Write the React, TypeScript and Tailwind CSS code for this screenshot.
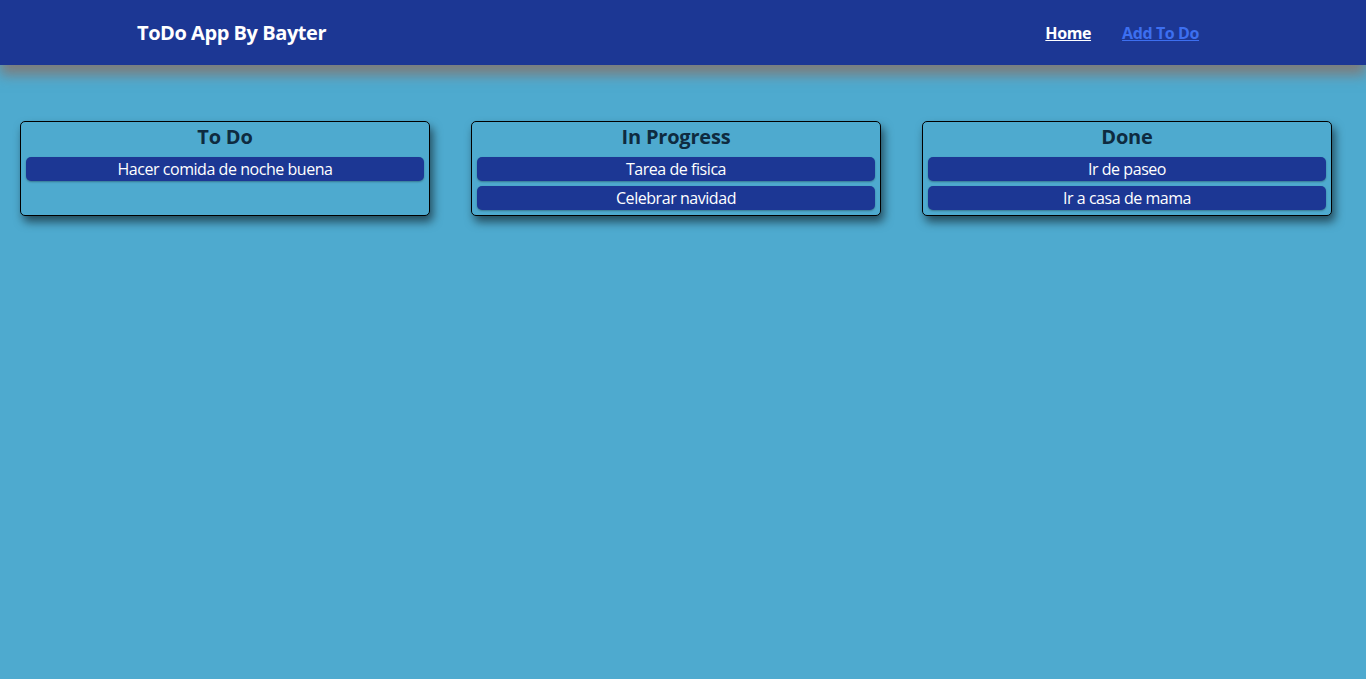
import React from 'react';

interface Column {
  title: string;
  items: string[];
}

const columns: Column[] = [
  { title: 'To Do', items: ['Hacer comida de noche buena'] },
  { title: 'In Progress', items: ['Tarea de fisica', 'Celebrar navidad'] },
  { title: 'Done', items: ['Ir de paseo', 'Ir a casa de mama'] },
];

const Board: React.FC<{ column: Column }> = ({ column }) => (
  <div className="w-[410px] border border-black rounded-[5px] bg-[#4eaacf] px-[5px] pb-[5px] shadow-[3px_6px_10px_rgba(0,0,0,0.55)]">
    <h2 className="text-center text-[20px] font-bold leading-[30px] tracking-[-0.2px] text-[#0e2b40] mb-[5px]">{column.title}</h2>
    <div className="flex flex-col gap-[5px]">
      {column.items.map((item) => (
        <div
          key={item}
          className="h-[24px] rounded-[5px] bg-[#1c3794] text-white text-[16px] leading-[24px] tracking-[-0.45px] text-center shadow-[0_1px_2px_rgba(0,0,0,0.3)]"
        >
          {item}
        </div>
      ))}
    </div>
  </div>
);

export default function App() {
  return (
    <div className="min-h-[679px] bg-[#4eaacf]" style={{ fontFamily: '"Open Sans", "Noto Sans", sans-serif' }}>
      <nav className="h-[65px] bg-[#1c3794] flex items-center justify-between pl-[137px] pr-[167px] shadow-[0_10px_12px_rgba(125,125,125,1)] relative">
        <h1 className="text-white text-[20px] font-bold tracking-[-0.45px]">ToDo App By Bayter</h1>
        <div className="flex items-center gap-[31px] text-[16px] font-bold tracking-[-0.4px]">
          <a href="#" className="text-white underline">Home</a>
          <a href="#" className="text-[#3d6ff0] underline">Add To Do</a>
        </div>
      </nav>
      <main className="flex items-stretch gap-[41px] pl-[20px] pt-[56px]">
        {columns.map((c) => (
          <Board key={c.title} column={c} />
        ))}
      </main>
    </div>
  );
}
